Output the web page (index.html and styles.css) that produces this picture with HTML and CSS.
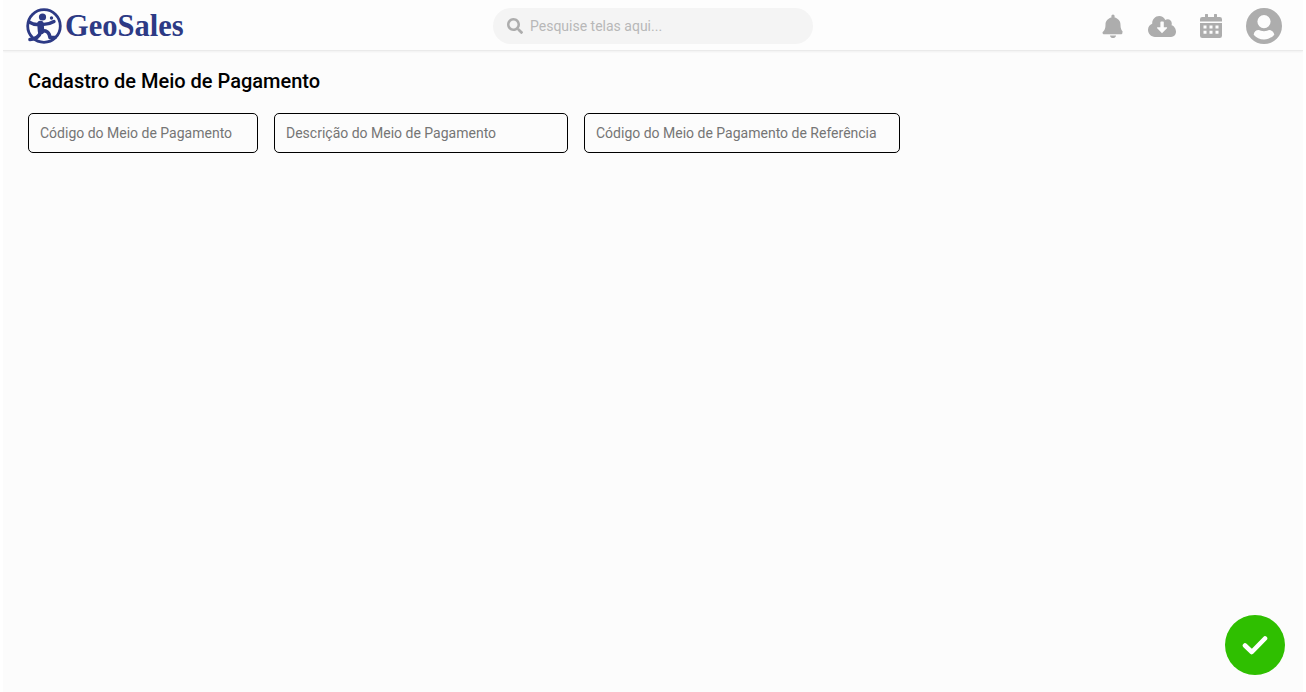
FILE: index.html
```html
<!DOCTYPE html>
<html lang="pt-br">
<head>
    <meta charset="UTF-8">
    <meta name="viewport" content="width=device-width, initial-scale=1.0">
    <link rel="stylesheet" href="styles.css">
    <title>Cadastro de Meio de Pagamento</title>
</head>
<body>
    <div class="app">
        <header class="topbar">
            <a class="logo" href="#">
                <svg class="logo-mark" viewBox="0 0 36 36" aria-hidden="true">
                    <circle cx="18" cy="18" r="16.300" fill="none" stroke="#2d3a85" stroke-width="2.800"/>
                    <circle cx="16.500" cy="9" r="3.600" fill="#2d3a85"/>
                    <circle cx="25.500" cy="10" r="1.700" fill="#2d3a85"/>
                    <g fill="none" stroke="#2d3a85" stroke-linecap="round" stroke-linejoin="round">
                        <path d="M3 14 Q9 17.500 14 16 Q21 17.500 28 13.500" stroke-width="3.400"/>
                        <path d="M14.500 16 L15 23" stroke-width="6.500"/>
                        <path d="M14.500 24 Q13 30.500 4 31.500" stroke-width="3.600"/>
                        <path d="M15 23 Q23 21.500 24 29.500 L29 29.500" stroke-width="3.600"/>
                    </g>
                </svg>
                <span class="logo-text">GeoSales</span>
            </a>
            <label class="search">
                <svg class="search-icon" viewBox="0 0 512 512" aria-hidden="true">
                    <path d="M505 442.700L405.300 343c-4.500-4.500-10.600-7-17-7H372c27.600-35.300 44-79.700 44-128C416 93.100 322.900 0 208 0S0 93.100 0 208s93.100 208 208 208c48.300 0 92.700-16.400 128-44v16.300c0 6.400 2.500 12.500 7 17l99.700 99.700c9.400 9.400 24.600 9.400 33.900 0l28.300-28.300c9.400-9.400 9.400-24.600.1-34zM208 336c-70.700 0-128-57.200-128-128 0-70.700 57.200-128 128-128 70.700 0 128 57.200 128 128 0 70.700-57.200 128-128 128z"/>
                </svg>
                <input class="search-input" type="text" placeholder="Pesquise telas aqui...">
            </label>
            <nav class="actions">
                <svg class="icon icon-bell" viewBox="0 0 24 24" aria-hidden="true">
                    <path d="M12 24c1.700 0 3-1.200 3-2.600H9c0 1.400 1.300 2.600 3 2.600zm10.100-6.200c-.9-1-2.600-2.400-2.600-7.100 0-3.500-2.500-6.400-5.900-7.100V2.100C13.600 1.200 12.900.4 12 .4s-1.600.8-1.600 1.700v1.500C7 4.300 4.500 7.200 4.500 10.700c0 4.700-1.700 6.100-2.600 7.100-.3.300-.4.600-.4 1 0 .8.600 1.500 1.500 1.500h17c.9 0 1.500-.7 1.500-1.500 0-.4-.1-.7-.4-1z"/>
                </svg>
                <svg class="icon icon-cloud" viewBox="0 0 28 20" preserveAspectRatio="none" aria-hidden="true">
                    <path fill-rule="evenodd" d="M23.500 8.700C23.700 8.200 23.800 7.700 23.800 7.100c0-2.300-1.900-4.100-4.200-4.100-.9 0-1.700.3-2.300.7C16.100 1.500 13.800 0 11.200 0 7.300 0 4.200 3.100 4.200 7v.4C1.700 8.200 0 10.600 0 13.200 0 16.900 3.100 20 7 20h16.100c2.700 0 4.900-2.200 4.900-4.900 0-3.100-1.900-5.800-4.500-6.400z M14 16.500 9.200 11.700c-.4-.4-.1-1.100.5-1.100h2.700V6c0-.4.300-.7.700-.7h2c.4 0 .7.300.7.700v4.600h2.700c.6 0 .9.700.5 1.100z"/>
                </svg>
                <svg class="icon icon-calendar" viewBox="0 0 22 24" aria-hidden="true">
                    <path fill-rule="evenodd" d="M0 9h22v12.750A2.250 2.250 0 0 1 19.750 24H2.250A2.250 2.250 0 0 1 0 21.750z M3.500 11.500v3h3v-3z M9.500 11.500v3h3v-3z M15.500 11.500v3h3v-3z M3.500 16.800v3h3v-3z M9.500 16.800v3h3v-3z M15.500 16.800v3h3v-3z"/>
                    <path d="M2.250 3H5V.6c0-.3.300-.6.600-.6h1.800c.3 0 .6.300.6.600V3h6V.6c0-.3.300-.6.600-.6h1.800c.3 0 .6.300.6.600V3h2.750A2.250 2.250 0 0 1 22 5.250V7.500H0V5.250A2.250 2.250 0 0 1 2.250 3z"/>
                </svg>
                <svg class="avatar" viewBox="0 0 36 36" aria-hidden="true">
                    <path fill-rule="evenodd" d="M18 0a18 18 0 1 1 0 36 18 18 0 0 1 0-36z M18 7a6.600 6.600 0 1 0 0 13.200A6.600 6.600 0 0 0 18 7z M18 31.500c4.100 0 7.800-1.900 10.300-4.800-.2-2.600-2.300-4.600-4.900-4.600-.8 0-1.400.5-2.300.7-1 .3-2 .5-3.100.5s-2.100-.2-3.100-.5c-.9-.2-1.500-.7-2.300-.7-2.600 0-4.700 2-4.900 4.600 2.500 2.900 6.200 4.800 10.300 4.800z"/>
                </svg>
            </nav>
        </header>

        <main class="content">
            <h1 class="title">Cadastro de Meio de Pagamento</h1>
            <form class="fields">
                <input class="field field-code" type="text" placeholder="Código do Meio de Pagamento">
                <input class="field field-desc" type="text" placeholder="Descrição do Meio de Pagamento">
                <input class="field field-ref" type="text" placeholder="Código do Meio de Pagamento de Referência">
            </form>
        </main>

        <button class="fab" type="button" aria-label="Confirmar">
            <svg viewBox="0 0 26 20" aria-hidden="true">
                <path d="M3 10.500 9.800 17 23 3.500" fill="none" stroke="#fff" stroke-width="4.600" stroke-linecap="round" stroke-linejoin="round"/>
            </svg>
        </button>
    </div>
</body>
</html>
```

FILE: styles.css
```css
* {
    margin: 0;
    padding: 0;
    box-sizing: border-box;
}

body {
    background-color: #fff;
    font-family: Roboto, "Liberation Sans", sans-serif;
}

.app {
    position: relative;
    height: 692px;
    margin: 0 3px;
    overflow: hidden;
    background-color: #fcfcfc;
}

/* topo */
.topbar {
    display: grid;
    grid-template-columns: 1fr 320px 1fr;
    align-items: center;
    height: 51px;
    padding: 2px 21px 0;
    background-color: #fdfdfd;
    border-bottom: 1px solid #eaeaea;
    box-shadow: 0 1px 2px rgba(0, 0, 0, 0.05);
}

.logo {
    display: flex;
    align-items: center;
    gap: 3px;
    margin-left: 2px;
    text-decoration: none;
}

.logo-mark {
    width: 36px;
    height: 36px;
}

.logo-text {
    font-family: "Liberation Serif", serif;
    font-size: 30.500px;
    font-weight: bold;
    color: #2d3a85;
}

.search {
    display: flex;
    align-items: center;
    gap: 7px;
    height: 36px;
    padding: 0 14px;
    background-color: #f4f4f4;
    border-radius: 18px;
}

.search-icon {
    width: 16px;
    height: 16px;
    fill: #adadad;
    flex-shrink: 0;
}

.search-input {
    width: 100%;
    border: none;
    outline: none;
    background-color: transparent;
    font-family: inherit;
    font-size: 14px;
}

.search-input::placeholder {
    color: #b8b8b8;
    opacity: 1;
}

.actions {
    display: flex;
    align-items: center;
    justify-content: flex-end;
    gap: 24px;
}

.icon {
    fill: #adadad;
}

.icon-bell {
    width: 24px;
    height: 24px;
}

.icon-cloud {
    width: 28px;
    height: 21px;
    margin-left: -1px;
}

.icon-calendar {
    width: 22px;
    height: 24px;
}

.avatar {
    width: 36px;
    height: 36px;
    fill: #adadad;
}

/* conteudo */
.content {
    padding: 18px 25px;
}

.title {
    font-size: 20px;
    font-weight: 500;
    line-height: 24px;
    color: #000;
}

.fields {
    display: flex;
    gap: 16px;
    margin-top: 20px;
}

.field {
    height: 40px;
    padding: 0 11px;
    background-color: transparent;
    border: 1px solid #000;
    border-radius: 5px;
    font-family: inherit;
    font-size: 14px;
    outline: none;
}

.field::placeholder {
    color: #757575;
    opacity: 1;
}

.field-code {
    width: 230px;
}

.field-desc {
    width: 294px;
}

.field-ref {
    width: 316px;
}

.fab {
    position: absolute;
    right: 18px;
    bottom: 17px;
    display: flex;
    align-items: center;
    justify-content: center;
    width: 60px;
    height: 60px;
    background-color: #2fbf00;
    border: none;
    border-radius: 50%;
    cursor: pointer;
}

.fab svg {
    width: 26px;
    height: 20px;
}
```
